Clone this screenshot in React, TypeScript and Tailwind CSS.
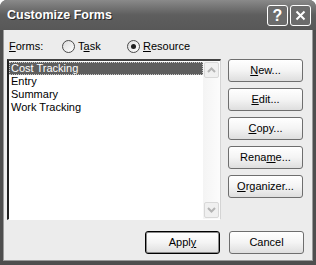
const font = 'font-["Liberation_Sans",Arial,sans-serif]'

function Key({ children }: { children: string }) {
  return <span className="underline underline-offset-[1px]">{children}</span>
}

function Radio({ checked }: { checked?: boolean }) {
  return (
    <span className="w-[13px] h-[13px] rounded-full border border-[#4a4a4a] bg-gradient-to-br from-[#dcdcdc] to-white flex items-center justify-center">
      {checked && <span className="w-[5px] h-[5px] rounded-full bg-[#1e1e1e]" />}
    </span>
  )
}

function Btn({ children, isDefault }: { children: React.ReactNode; isDefault?: boolean }) {
  return (
    <div
      className={`h-[23px] w-[75px] flex items-center justify-center rounded-[3px] border bg-gradient-to-b from-white via-[#f4f4f4] to-[#dedede] text-[11px] text-black ${
        isDefault ? 'border-black shadow-[inset_0_0_0_1px_#8a8a8a]' : 'border-[#6e6e6e]'
      }`}
    >
      <span>{children}</span>
    </div>
  )
}

function Chevron({ up }: { up?: boolean }) {
  return (
    <svg width="9" height="6" viewBox="0 0 9 6">
      <path
        d={up ? 'M1 5 L4.5 1.5 L8 5' : 'M1 1 L4.5 4.5 L8 1'}
        fill="none"
        stroke="#b4b4b4"
        strokeWidth="2"
      />
    </svg>
  )
}

export default function App() {
  const items = ['Cost Tracking', 'Entry', 'Summary', 'Work Tracking']

  return (
    <div className={`w-[316px] h-[265px] bg-white ${font}`}>
      <div className="w-full h-full flex flex-col rounded-t-[7px] overflow-hidden bg-[#4e4e4e]">
        {/* Title bar */}
        <div className="h-[30px] shrink-0 flex items-center justify-between pl-[7px] pr-[5px] bg-gradient-to-b from-[#8a8a8a] via-[#5e5e5e] to-[#585858]">
          <span className="text-white font-bold text-[12.5px] [text-shadow:1px_1px_0_#2a2a2a]">
            Customize Forms
          </span>
          <div className="flex gap-[2px] pt-[1px]">
            <div className="w-[21px] h-[21px] rounded-[3px] border border-white bg-[#6c6c6c] flex items-center justify-center text-white font-bold text-[16px] leading-none">
              ?
            </div>
            <div className="w-[21px] h-[21px] rounded-[3px] border border-white bg-[#6c6c6c] flex items-center justify-center">
              <svg width="11" height="11" viewBox="0 0 11 11">
                <path d="M1.5 1.5 L9.5 9.5 M9.5 1.5 L1.5 9.5" stroke="white" strokeWidth="2" />
              </svg>
            </div>
          </div>
        </div>

        {/* Body */}
        <div className="flex-1 mx-[3px] mb-[4px] border-l border-r border-b border-[#9a9a9a] bg-[#ececec] text-[11px] text-black flex flex-col">
          <div className="mt-[10px] h-[13px] flex items-center pl-[5px]">
            <span className="w-[53px]">
              <Key>F</Key>orms:
            </span>
            <span className="flex items-center gap-[3px] w-[65px]">
              <Radio />
              <span>
                T<Key>a</Key>sk
              </span>
            </span>
            <span className="flex items-center gap-[3px]">
              <Radio checked />
              <span>
                <Key>R</Key>esource
              </span>
            </span>
          </div>

          <div className="mt-[6px] flex pl-[3px]">
            {/* List box */}
            <div className="w-[214px] h-[161px] border-t-2 border-l-2 border-t-[#404040] border-l-[#202020] border-b border-r border-b-white border-r-[#d4d4d4] bg-white flex">
              <div className="flex-1 pt-[1px] flex flex-col">
                {items.map((it, i) => (
                  <div
                    key={it}
                    className={`h-[13px] leading-[13px] pl-[2px] ${
                      i === 0 ? 'bg-[#5e5e5e] text-white outline-1 outline-dotted outline-[#c8c8c8] -outline-offset-1' : ''
                    }`}
                  >
                    {it}
                  </div>
                ))}
              </div>
              <div className="w-[17px] flex flex-col justify-between bg-gradient-to-r from-[#f4f4f4] to-[#fcfcfc] p-[1px]">
                <div className="h-[16px] rounded-[2px] border border-[#d8d8d8] bg-[#f0f0f0] flex items-center justify-center">
                  <Chevron up />
                </div>
                <div className="h-[16px] rounded-[2px] border border-[#d8d8d8] bg-[#f0f0f0] flex items-center justify-center">
                  <Chevron />
                </div>
              </div>
            </div>

            {/* Right buttons */}
            <div className="ml-[7px] flex flex-col gap-[6px]">
              <Btn>
                <Key>N</Key>ew...
              </Btn>
              <Btn>
                <Key>E</Key>dit...
              </Btn>
              <Btn>
                <Key>C</Key>opy...
              </Btn>
              <Btn>
                Rena<Key>m</Key>e...
              </Btn>
              <Btn>
                <Key>O</Key>rganizer...
              </Btn>
            </div>
          </div>

          <div className="mt-[11px] flex justify-end gap-[9px] pr-[8px]">
            <Btn isDefault>
              Appl<Key>y</Key>
            </Btn>
            <Btn>Cancel</Btn>
          </div>
        </div>
      </div>
    </div>
  )
}
